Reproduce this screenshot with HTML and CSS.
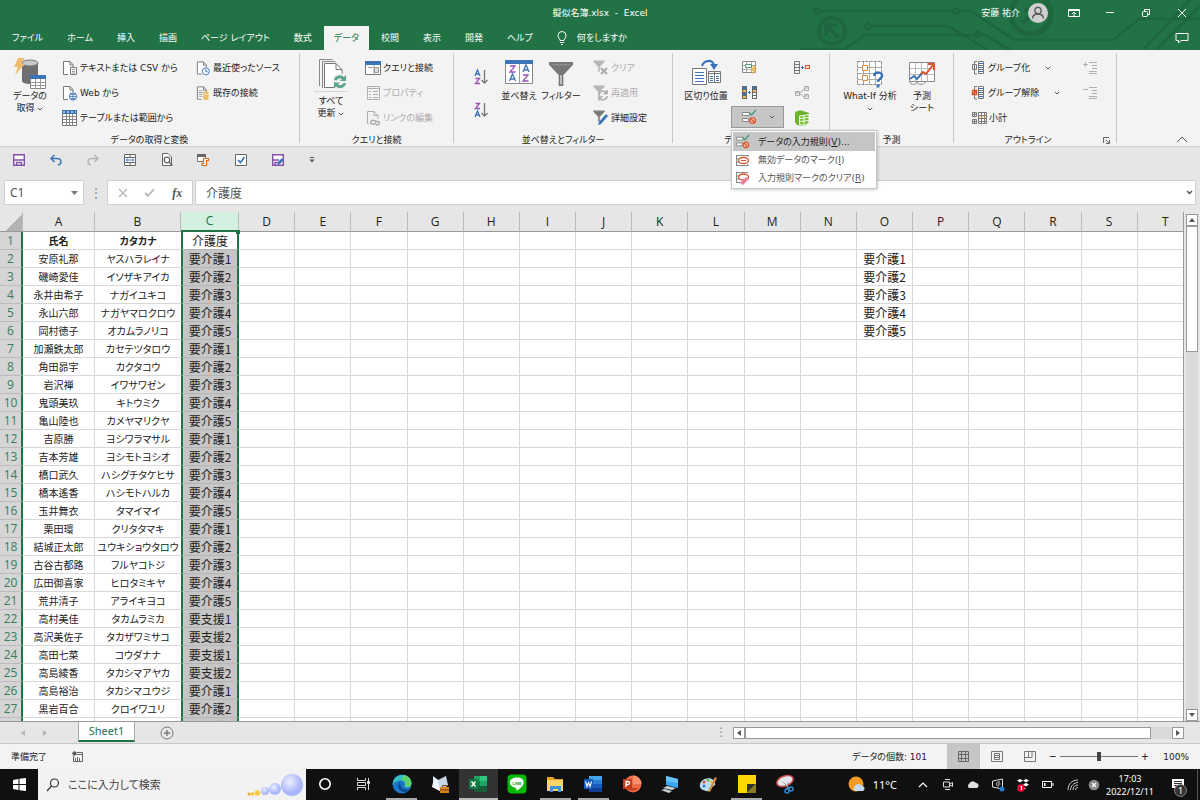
FILE: index.html
```html
<!DOCTYPE html>
<html lang="ja">
<head>
    <meta charset="UTF-8">
    <meta name="viewport" content="width=device-width, initial-scale=1.0">
    <title>擬似名簿.xlsx - Excel</title>
    <link rel="stylesheet" href="styles.css">
</head>
<body>
    <!-- Shared icons -->
    <svg class="sprite" aria-hidden="true">
        <symbol id="i-chevron" viewBox="0 0 6 4"><path d="M.8.8 3 3 5.2.8" fill="none" stroke="currentColor"/></symbol>
        <symbol id="i-doc" viewBox="0 0 16 16"><path d="M2.500 1.500h7l3.500 3.500v9.500H2.500z" fill="#fff"/><path d="M7 14.500H2.500v-13h6.500l3 3v3M9 1.500v3.500h3" fill="none" stroke="#777"/></symbol>
        <symbol id="i-rule" viewBox="0 0 16 16"><path d="M1.500 3.500h7v3h-7zM1.500 9.500h6v3h-6z" fill="#fff" stroke="#888"/><path d="M8 3.500l2.500 2.500 4.500-5" fill="none" stroke="#4a9a80" stroke-width="1.500"/><circle cx="11.500" cy="11.500" r="3" fill="#f4b9a8" stroke="#d9532c" stroke-width="1.200"/><path d="M9.500 9.500l4 4" stroke="#d9532c" stroke-width="1.200"/></symbol>
        <symbol id="i-funnel" viewBox="0 0 28 28"><path d="M1 1h26v3L16.500 15v12h-5V15L1 4z" fill="#777"/><path d="M4 4h20" stroke="#999"/><path d="M14 15v10" stroke="#ddd" stroke-width="1.500"/></symbol>
    </svg>

    <header class="title-area">
        <svg class="circuit" viewBox="0 0 400 50" fill="none" stroke="#1e6540" stroke-width="2.500">
            <circle cx="17" cy="11" r="2.500"/><path d="M20 11h133M159 11h12l44 29h98l26-21h61"/>
            <circle cx="32" cy="31" r="13" stroke-width="4"/><path d="M38 37 27 26m-1 10V25h11" stroke-width="4"/>
            <circle cx="68" cy="26" r="3"/><path d="M72 26h76l40 24M0 49h44l21-14h110m6 0h4l25 15"/>
            <circle cx="156" cy="11" r="2.500"/><circle cx="178" cy="34" r="2.500"/>
            <circle cx="231" cy="14" r="20" stroke-width="5"/><path d="m222 24 14-14m-12 0h12v12" stroke-width="4"/>
            <path d="M343 50 390 0M356 50 400 6"/>
        </svg>
        <div class="title-bar">
            <div class="doc-title">擬似名簿.xlsx &nbsp;-&nbsp; Excel</div>
            <div class="window-tools">
                <span class="user-name">安藤 祐介</span>
                <span class="avatar"><svg width="20" height="20" viewBox="0 0 20 20" fill="none" stroke="#555" stroke-width="1.300"><circle cx="10" cy="7.500" r="3.200"/><path d="M4.500 15.500c.5-6 10.500-6 11 0"/></svg></span>
                <button class="win-btn" aria-label="リボンの表示オプション"><svg width="12" height="10" viewBox="0 0 12 10" fill="none" stroke="#fff"><path d="M.5 1.500h11v7H.5zM.5 2.500h11M6 8V4M4 6l2-2 2 2"/></svg></button>
                <button class="win-btn" aria-label="最小化"><svg width="10" height="10" viewBox="0 0 10 10" stroke="#fff"><path d="M1 4.500h8"/></svg></button>
                <button class="win-btn" aria-label="元に戻す"><svg width="10" height="10" viewBox="0 0 10 10" fill="none" stroke="#fff"><rect x="1.500" y="3.500" width="5" height="5" rx="1"/><path d="M3.500 3V1.500h5v5H7"/></svg></button>
                <button class="win-btn" aria-label="閉じる"><svg width="10" height="10" viewBox="0 0 10 10" stroke="#fff"><path d="M1 1l8 8M9 1 1 9"/></svg></button>
            </div>
        </div>
        <nav class="tabs">
            <button class="tab">ファイル</button>
            <button class="tab">ホーム</button>
            <button class="tab">挿入</button>
            <button class="tab">描画</button>
            <button class="tab">ページ レイアウト</button>
            <button class="tab">数式</button>
            <button class="tab active">データ</button>
            <button class="tab">校閲</button>
            <button class="tab">表示</button>
            <button class="tab">開発</button>
            <button class="tab">ヘルプ</button>
            <button class="tab tell-me"><svg width="10" height="14" viewBox="0 0 10 14" fill="none" stroke="#fff"><path d="M3 9.500C3 7.500 1 7 1 4.500a4 4 0 0 1 8 0C9 7 7 7.500 7 9.500zM3 11.500h4M4 13.500h2"/></svg>何をしますか</button>
            <button class="comments" aria-label="コメント"><svg width="14" height="12" viewBox="0 0 14 12" fill="none" stroke="#fff"><path d="M1 1.500h12v7H6L3.500 11V8.500H1z"/></svg></button>
        </nav>
    </header>

    <section class="ribbon">
        <div class="group get-data">
            <div class="group-body">
                <button class="big">
                    <svg width="32" height="32" viewBox="0 0 32 32"><path d="M8 5v18c0 4 16 4 16 0V5z" fill="#6f6f6f"/><ellipse cx="16" cy="5" rx="8" ry="3" fill="#c8c8c8" stroke="#777"/><path d="M4 0h7L7 6h4L1 17l3-8H0z" fill="#eebc6c"/><path d="M16.500 17.500h15v13h-15z" fill="#fff" stroke="#888"/><path d="M16 17h16v4H16z" fill="#3c74b8"/><path d="M17 24.500h14M17 27.500h14M21.500 21v9M26.500 21v9" stroke="#999"/></svg>
                    <span>データの<br>取得 <svg class="chev"><use href="#i-chevron"/></svg></span>
                </button>
                <div class="cmd-col">
                    <button class="cmd"><svg width="17" height="16" viewBox="0 0 17 16"><use href="#i-doc" width="16" height="16"/><path d="M9.500 7.500h6v7h-6z" fill="#fff" stroke="#777"/><path d="M11 9.500h3M11 11.500h3M11 13h3" stroke="#999"/></svg>テキストまたは CSV から</button>
                    <button class="cmd"><svg width="17" height="16" viewBox="0 0 17 16"><use href="#i-doc" width="16" height="16"/><circle cx="12" cy="11.500" r="3.700" fill="#fff" stroke="#3c74b8"/><path d="M8.500 11.500h7M12 8v7M9.500 9.500h5M9.500 13.500h5" stroke="#3c74b8" stroke-width=".8"/></svg>Web から</button>
                    <button class="cmd"><svg width="17" height="16" viewBox="0 0 17 16"><path d="M1.500 2.500h14v13h-14z" fill="#fff" stroke="#777"/><path d="M1 0h15v4H1z" fill="#3c74b8"/><path d="M2 2h13" stroke="#fff" stroke-dasharray="2 2"/><path d="M2 6.500h13M2 9.500h13M2 12.500h13M5.500 4v11M8.500 4v11M11.500 4v11" stroke="#888"/></svg>テーブルまたは範囲から</button>
                </div>
                <div class="cmd-col">
                    <button class="cmd"><svg width="16" height="16" viewBox="0 0 17 16"><use href="#i-doc" width="16" height="16"/><circle cx="11.500" cy="11.500" r="3.700" fill="#fff" stroke="#3c74b8"/><path d="M11.500 9v3h2" fill="none" stroke="#3c74b8"/></svg>最近使ったソース</button>
                    <button class="cmd"><svg width="16" height="16" viewBox="0 0 17 16"><use href="#i-doc" width="16" height="16"/><path d="M4 5.500h4M4 7.500h5M4 9.500h4M4 11.500h4" stroke="#999"/><path d="M8.500 8v6c0 2 6 2 6 0V8c0-2-6-2-6 0z" fill="#efbd6b"/><path d="M8.500 8.500c0 1.500 6 1.500 6 0" fill="none" stroke="#fff" stroke-width=".7"/></svg>既存の接続</button>
                </div>
            </div>
            <div class="group-name">データの取得と変換</div>
        </div>

        <div class="group queries">
            <div class="group-body">
                <button class="big split">
                    <svg width="32" height="32" viewBox="0 0 32 32"><path d="M4.500 28V1.500h13M7.500 30V3.500h13" fill="none" stroke="#888"/><path d="M9.500 5.500H21l6 6v18H9.500z" fill="#fff" stroke="#777"/><path d="M21 5.500v6h6" fill="none" stroke="#777"/><circle cx="25" cy="23.500" r="8" fill="#f3f3f3"/><path d="M19 22a6 6 0 0 1 10-3l2-2v6h-6l2-2a4 4 0 0 0-5.500 1.500zM31 25a6 6 0 0 1-10 3.500l-2 2v-6h6l-2 2a4 4 0 0 0 5.500-1.500z" fill="#5fa58a"/></svg>
                    <span>すべて<br>更新 <svg class="chev"><use href="#i-chevron"/></svg></span>
                </button>
                <div class="cmd-col">
                    <button class="cmd"><svg width="16" height="16" viewBox="0 0 16 16"><path d="M.5 2.500h15v12H.5z" fill="#fff" stroke="#777"/><path d="M0 1h16v4H0z" fill="#3c74b8"/><path d="M9.500 7.500h4v5h-4zM3 7.500h5M9 5v9" fill="#ddd" stroke="#999"/></svg>クエリと接続</button>
                    <button class="cmd" disabled><svg width="16" height="16" viewBox="0 0 16 16" fill="none" stroke="#b5adb5"><path d="M2.500 1.500h12v13h-12zM2 3.500h12M4 6.500h2M4 9.500h2M4 12.500h2M8 6.500h5M8 9.500h5M8 12.500h5"/></svg>プロパティ</button>
                    <button class="cmd" disabled><svg width="16" height="16" viewBox="0 0 16 16" fill="none" stroke="#b0aab0"><path d="M4 13.500H2.500v-12H9l4 4V9M9 1.500v4h4"/><path d="M7 10.500h2.500a1.800 1.800 0 0 1 0 3.500H7a1.800 1.800 0 0 1 0-3.500zm4 1h2a1.800 1.800 0 0 1 0 3.500h-2" stroke-width="1.500"/></svg>リンクの編集</button>
                </div>
            </div>
            <div class="group-name">クエリと接続</div>
        </div>

        <div class="group sort">
            <div class="group-body">
                <div class="sort-col">
                    <button class="sort-btn" aria-label="昇順"><svg width="16" height="18" viewBox="0 0 16 18" fill="none" stroke-width="1.300"><path d="M2 8 4.500 2 7 8M3 6h3" stroke="#3c74b8"/><path d="M2.500 10.500h4l-4 5h4.500" stroke="#9a4fb5"/><path d="M11.500 2v13M8.500 12l3 3 3-3" stroke="#777"/></svg></button>
                    <button class="sort-btn" aria-label="降順"><svg width="16" height="18" viewBox="0 0 16 18" fill="none" stroke-width="1.300"><path d="M2.500 2.500h4l-4 5h4.500" stroke="#9a4fb5"/><path d="m2 16 2.500-6L7 16M3 14h3" stroke="#3c74b8"/><path d="M11.500 2v13M8.500 12l3 3 3-3" stroke="#777"/></svg></button>
                </div>
                <button class="big">
                    <svg width="28" height="32" viewBox="0 0 28 32"><path d="M.5 4.500h27v21H.5z" fill="#fff" stroke="#888"/><path d="M0 2h28v4H0z" fill="#3c74b8"/><path d="M14.500 6v20" stroke="#999"/><g fill="none" stroke-width="1.300"><path d="M5 8h5l-5 6h5.500M18 17h5l-5 6h5.500" stroke="#9a4fb5"/><path d="m4.500 23 3-7 3 7M5.500 21h4M18 14l3-7 3 7M19 12h4" stroke="#3c74b8"/></g></svg>
                    <span>並べ替え</span>
                </button>
                <button class="big">
                    <svg width="26" height="32" viewBox="0 0 28 32"><use href="#i-funnel" y="2" width="28" height="28"/></svg>
                    <span>フィルター</span>
                </button>
                <div class="cmd-col">
                    <button class="cmd" disabled><svg width="16" height="16" viewBox="0 0 16 16"><use href="#i-funnel" width="12" height="12" opacity=".5"/><path d="m8 8 6 6m0-6-6 6" stroke="#aaa" stroke-width="2"/></svg>クリア</button>
                    <button class="cmd" disabled><svg width="16" height="16" viewBox="0 0 16 16"><use href="#i-funnel" width="12" height="12" opacity=".5"/><path d="M6 10a4 4 0 0 1 7-2.500M14 5v3.500h-3.500M14 11a4 4 0 0 1-7 2.500M6 15.500V12h3.500" fill="none" stroke="#aaa" stroke-width="1.500"/></svg>再適用</button>
                    <button class="cmd"><svg width="16" height="16" viewBox="0 0 16 16"><use href="#i-funnel" width="12" height="12"/><path d="m5 15 1-3 7-8 2 2-7 8z" fill="#3c74b8"/></svg>詳細設定</button>
                </div>
            </div>
            <div class="group-name">並べ替えとフィルター</div>
        </div>

        <div class="group tools">
            <div class="group-body">
                <button class="big">
                    <svg width="30" height="32" viewBox="0 0 30 32"><path d="M11 8c2-6 10-7 12-1" fill="none" stroke="#3c74b8" stroke-width="2.200"/><path d="M19 6h8l-4 6z" fill="#3c74b8"/><path d="M1.500 10.500h14v16h-14z" fill="#fff" stroke="#777"/><path d="M4 14.500h9M4 17.500h9M4 20.500h9M4 23.500h9" stroke="#3c74b8"/><path d="M17.500 13.500h12v11h-12z" fill="#fff" stroke="#777"/><path d="M18 15.500h11M23.500 14v10" stroke="#777"/><path d="M19 18.500h3M19 20.500h3M19 22.500h3M25 18.500h3M25 20.500h3M25 22.500h3" stroke="#3c74b8"/></svg>
                    <span>区切り位置</span>
                </button>
                <div class="tool-col">
                    <button class="tool" aria-label="フラッシュ フィル"><svg width="16" height="16" viewBox="0 0 16 16"><path d="M1.500 1.500h13v11h-13z" fill="#fff" stroke="#888"/><path d="M2 5.500h12M2 9.500h12M5.500 2v10M10.500 2v10" stroke="#aaa"/><path d="M4.500 4.500h6v3h-6z" fill="#fff" stroke="#4a9a80"/><path d="M12 6h3l-1 3h2l-5 6 1-4h-2z" fill="#eebc5c"/></svg></button>
                    <button class="tool" aria-label="重複の削除"><svg width="16" height="16" viewBox="0 0 16 16"><path d="M1 1h5v13H1zM11 1h5v13h-5z" fill="#666"/><path d="M2 2h3v2H2zM2 8h3v2H2zM12 2h3v2h-3z" fill="#3c74b8"/><path d="M2 5h3v2H2zM2 11h3v2H2zM12 5h3v2h-3z" fill="#eebc6c"/><path d="M12 8h3v2h-3zM12 11h3v2h-3z" fill="#fff"/><path d="M7 7.500h3M8.500 6v3" stroke="#3c74b8"/></svg></button>
                    <div class="menu-anchor">
                        <button class="tool pressed" aria-label="データの入力規則"><svg width="16" height="16"><use href="#i-rule"/></svg><svg class="chev"><use href="#i-chevron"/></svg></button>
                        <div class="menu">
                            <button class="menu-item selected"><svg width="15" height="15"><use href="#i-rule"/></svg><span>データの入力規則(<u>V</u>)...</span></button>
                            <button class="menu-item"><svg width="15" height="15" viewBox="0 0 15 15" fill="none"><path d="M1 2.500h12M1 6h12M1 9h12M1 12.500h12M1.500 2v11M13 2v2M13 11v2" stroke="#888"/><ellipse cx="8.500" cy="7.500" rx="5" ry="3" fill="#fff" stroke="#d9532c" stroke-width="1.300"/><path d="M6 7.500h5" stroke="#d9532c"/></svg><span>無効データのマーク(<u>I</u>)</span></button>
                            <button class="menu-item"><svg width="15" height="15" viewBox="0 0 15 15" fill="none"><path d="M1 1.500h12M1 5h12M1 8h6M1 11.500h6M1.500 1v11" stroke="#888"/><ellipse cx="8.500" cy="6" rx="5" ry="3" fill="#fff" stroke="#d9532c" stroke-width="1.300"/><path d="m5 12 6-6 3 2-6 6z" fill="#e87f9c"/></svg><span>入力規則マークのクリア(<u>R</u>)</span></button>
                        </div>
                    </div>
                </div>
                <div class="tool-col narrow">
                    <button class="tool" aria-label="統合"><svg width="16" height="16" viewBox="0 0 16 16" fill="none"><path d="M.5 1.500h5v12h-5zM1 4.500h4M1 7.500h4M1 10.500h4" stroke="#777"/><path d="M7 7.500h3M8.500 6v3" stroke="#3c74b8"/><path d="M11.500 5.500h4v3h-4z" stroke="#d9532c" stroke-width="1.200"/></svg></button>
                    <button class="tool" aria-label="リレーションシップ"><svg width="16" height="16" viewBox="0 0 16 16" fill="none" stroke="#aaa"><path d="M1.500 6.500h4v4h-4zM10.500 1.500h4v4h-4zM10.500 9.500h4v4h-4zM6 8l4-4M6 9l4 3M10 3h5M10 11h5M1 8h5"/></svg></button>
                    <button class="tool" aria-label="データ モデルの管理"><svg width="16" height="16" viewBox="0 0 16 16"><path d="M1 3.500C1 1 6 0 9 1l6 2v10l-5 3-7-1-2-3z" fill="#6cb32c"/><path d="M5.500 6 15 4.500V13l-4 2.500-5.500-1zM5.500 8.500 15 7.500M5.500 11.500l9.500-1M10 5.500v9.500" fill="#7cc035" stroke="#fff" stroke-width=".9"/></svg></button>
                </div>
            </div>
            <div class="group-name">データ ツール</div>
        </div>

        <div class="group forecast">
            <div class="group-body">
                <button class="big what-if">
                    <svg width="28" height="32" viewBox="0 0 28 32"><path d="M1.500 3.500h24v23h-24z" fill="#fff" stroke="#888" stroke-dasharray="3 1"/><path d="M2 9.500h23M2 15.500h23M2 21.500h23M7.500 4v22M13.500 4v22M19.500 4v22" stroke="#aaa"/><path d="M6.500 7.500h5v5h-5zM6.500 17.500h5v5h-5z" fill="#fff" stroke="#ee8a35"/><path d="M18 18c1-5 9-4 8 0-.5 3-4 2.500-4 6" fill="none" stroke="#3c74b8" stroke-width="2.500"/><path d="M20.500 26.500h3v3h-3z" fill="#3c74b8"/></svg>
                    <span>What-If 分析<br><svg class="chev"><use href="#i-chevron"/></svg></span>
                </button>
                <button class="big">
                    <svg width="28" height="32" viewBox="0 0 28 32"><path d="M1.500 4.500h25v19h-25z" fill="#fff" stroke="#888"/><path d="M2 10.500h24M2 16.500h24M7.500 5v18M13.500 5v18M19.500 5v18" stroke="#bbb"/><path d="M2 24c0 3 7 3 7 0 0 3 8 3 8 0" fill="#fff" stroke="#888"/><path d="m2 21 4-3 3 3 5-6" fill="none" stroke="#3c74b8" stroke-width="2"/><path d="m13 16 2-2 3 2 7-9M20 6h6v6" fill="none" stroke="#d9532c" stroke-width="2"/></svg>
                    <span>予測<br>シート</span>
                </button>
            </div>
            <div class="group-name">予測</div>
        </div>

        <div class="group outline">
            <div class="group-body">
                <div class="cmd-col">
                    <button class="cmd far"><svg width="15" height="16" viewBox="0 0 15 16" fill="none" stroke="#777"><path d="M6 1.500H3.500V14H6M1.500 4.500h4v5h-4z"/><path d="M7.500 1.500h5v12h-5zM7 5.500h6M7 9.500h6" fill="#fff"/><path d="M8 3.500h4M8 7.500h4M8 11.500h4" stroke="#3c74b8"/></svg><span>グループ化</span><svg class="chev"><use href="#i-chevron"/></svg></button>
                    <button class="cmd far"><svg width="15" height="16" viewBox="0 0 15 16" fill="none" stroke="#777"><path d="M6 1.500H3.500V14H6"/><path d="M7.500 1.500h5v12h-5zM7 5.500h6M7 9.500h6" fill="#fff"/><path d="M8 3.500h4M8 7.500h4M8 11.500h4" stroke="#3c74b8"/><path d="M1.500 5.500h4v4h-4zM1 10l5-5" stroke="#d9532c" stroke-width="1.500"/></svg><span>グループ解除</span><svg class="chev"><use href="#i-chevron"/></svg></button>
                    <button class="cmd subtotal"><svg width="16" height="16" viewBox="0 0 16 16" fill="none" stroke="#777"><path d="M1.500 2.500h4v4h-4zM1.500 9.500h4v4h-4zM2 4.500h3M3.500 3v3M2 11.500h3M3.500 10v3"/><path d="M7.500 2.500h8v11h-8zM8 5.500h7M8 8.500h7M8 11.500h7M10.500 3v10M13.500 3v10" fill="#fff"/><path d="M8 7h7" stroke="#eebc6c"/></svg>小計</button>
                </div>
                <div class="cmd-col">
                    <button class="cmd" disabled aria-label="詳細データの表示"><svg width="15" height="16" viewBox="0 0 15 16" stroke="#b0b0b0"><path d="M0 4.500h5M2.500 2v5M6 2.500h8M9 5.500h5M9 8.500h5M6 11.500h8M6 13.500h8"/></svg></button>
                    <button class="cmd" disabled aria-label="詳細を表示しない"><svg width="15" height="16" viewBox="0 0 15 16" stroke="#b0b0b0"><path d="M0 4.500h5M6 2.500h8M9 5.500h5M9 8.500h5M6 11.500h8M6 13.500h8"/></svg></button>
                </div>
            </div>
            <div class="group-name">アウトライン<button class="launcher" aria-label="設定"><svg width="7" height="7" viewBox="0 0 7 7" fill="none" stroke="#666"><path d="M.5 6V.5H6M3 3l3 3M6.500 3v3.500H3"/></svg></button></div>
        </div>
        <button class="collapse" aria-label="リボンを折りたたむ"><svg width="12" height="7" viewBox="0 0 12 7" fill="none" stroke="#555"><path d="M1 6l5-5 5 5"/></svg></button>
    </section>

    <div class="quick-access">
        <button class="qa" aria-label="上書き保存"><svg width="12" height="12" viewBox="0 0 12 12"><path d="M.7.7h10.600v10.600H.7z" fill="#fff" stroke="#8350a5" stroke-width="1.400"/><path d="M1 6h10M3.500 11V8.500h5V11" fill="none" stroke="#8350a5" stroke-width="1.400"/></svg></button>
        <button class="qa" aria-label="元に戻す"><svg width="12" height="12" viewBox="0 0 12 12" fill="none" stroke="#3c74b8" stroke-width="1.500"><path d="M4.500 1 1 4.500 4.500 8M1 4.500h6c5 0 5 6 1 6.500"/></svg></button>
        <button class="qa" aria-label="やり直し"><svg width="12" height="12" viewBox="0 0 12 12" fill="none" stroke="#b5b5b5" stroke-width="1.500"><path d="M7.500 1 11 4.500 7.500 8M11 4.500H5c-5 0-5 6-1 6.500"/></svg></button>
        <button class="qa" aria-label="セルを結合"><svg width="12" height="12" viewBox="0 0 12 12" fill="none"><path d="M.5.500h11v11H.5z" fill="#fff" stroke="#666"/><path d="M1 3.500h10M1 8.500h10M6 1v2M6 9v2" stroke="#666"/><path d="M2 6h8M3.500 4.500 2 6l1.500 1.500M8.500 4.500 10 6 8.500 7.500" stroke="#3c74b8"/></svg></button>
        <button class="qa" aria-label="印刷プレビュー"><svg width="12" height="13" viewBox="0 0 12 13" fill="none" stroke="#666"><path d="M1.500.5H7l3.500 3.500v8.500h-9z" fill="#fff"/><circle cx="6" cy="7" r="2.800" stroke-width="1.300"/><path d="m8 9 3.500 3.500" stroke-width="1.500"/></svg></button>
        <button class="qa" aria-label="マクロ"><svg width="13" height="13" viewBox="0 0 13 13" fill="none"><path d="M.5 1.500h8v7h-8z" fill="#fff" stroke="#777"/><path d="M0 1h9v3H0z" fill="#666"/><path d="M6.500 5.500h5v2h-2v5H5v-2h1.500z" fill="#fff" stroke="#e07020" stroke-width="1.200"/></svg></button>
        <button class="qa" aria-label="チェック ボックス"><svg width="12" height="12" viewBox="0 0 12 12" fill="none"><path d="M.5.500h11v11H.5z" fill="#fff" stroke="#666"/><path d="m3 6 2.500 2.500L9.500 3" stroke="#2f6db5" stroke-width="1.600"/></svg></button>
        <button class="qa" aria-label="名前を付けて保存"><svg width="12" height="12" viewBox="0 0 12 12"><path d="M.7.7h10.600v10.600H.7z" fill="#fff" stroke="#8350a5" stroke-width="1.400"/><path d="M1 6h6M3 11V8.500h3" fill="none" stroke="#8350a5" stroke-width="1.400"/><path d="m5 11 1-3 4-4 2 2-4 4z" fill="#3c74b8"/></svg></button>
        <button class="qa" aria-label="ユーザー設定"><svg width="6" height="6" viewBox="0 0 6 6"><path d="M1 .5h4" stroke="#555"/><path d="M.5 2.500h5L3 5.500z" fill="#555"/></svg></button>
    </div>

    <div class="formula-bar">
        <div class="name-box">
            <input type="text" value="C1" aria-label="名前ボックス">
            <svg width="7" height="4" viewBox="0 0 7 4"><path d="M0 0h7L3.500 4z" fill="#777"/></svg>
        </div>
        <div class="grip">⋮</div>
        <div class="fx-box">
            <button aria-label="キャンセル"><svg width="10" height="10" viewBox="0 0 10 10" stroke="#b5b5b5" stroke-width="1.300"><path d="m1 1 8 8M9 1 1 9"/></svg></button>
            <button aria-label="入力"><svg width="11" height="10" viewBox="0 0 11 10" fill="none" stroke="#b5b5b5" stroke-width="1.800"><path d="m1 5 3 3 6-7"/></svg></button>
            <button class="fx" aria-label="関数の挿入">fx</button>
        </div>
        <div class="formula">
            <input type="text" value="介護度" aria-label="数式バー">
            <svg width="7" height="5" viewBox="0 0 7 5" fill="none" stroke="#555" stroke-width="1.500"><path d="m1 1 2.500 2.500L6 1"/></svg>
        </div>
    </div>

    <main class="workspace">
        <div class="sheet">
            <table class="grid" id="grid">
                <colgroup>
                    <col class="c-num"><col class="c-a"><col class="c-b"><col class="c-c">
                </colgroup>
                <thead><tr id="gridHead"></tr></thead>
                <tbody id="gridBody"></tbody>
            </table>
        </div>
        <div class="v-scroll">
            <button class="arrow" aria-label="上へ"><svg width="6" height="4" viewBox="0 0 6 4"><path d="M0 4h6L3 0z" fill="#555"/></svg></button>
            <div class="v-track"><div class="v-thumb"></div></div>
            <button class="arrow" aria-label="下へ"><svg width="6" height="4" viewBox="0 0 6 4"><path d="M0 0h6L3 4z" fill="#555"/></svg></button>
        </div>
    </main>

    <div class="sheet-bar">
        <button class="sheet-nav" aria-label="前のシート"><svg width="4" height="6" viewBox="0 0 4 6"><path d="M4 0v6L0 3z" fill="#b5b5b5"/></svg></button>
        <button class="sheet-nav" aria-label="次のシート"><svg width="4" height="6" viewBox="0 0 4 6"><path d="M0 0v6l4-3z" fill="#b5b5b5"/></svg></button>
        <button class="sheet-tab">Sheet1</button>
        <button class="add-sheet" aria-label="新しいシート"><svg width="14" height="14" viewBox="0 0 14 14" fill="none" stroke="#777"><circle cx="7" cy="7" r="6"/><path d="M4 7h6M7 4v6" stroke-width="1.400"/></svg></button>
        <div class="grip bar-grip">⋮</div>
        <div class="h-scroll">
            <button class="arrow" aria-label="左へ"><svg width="4" height="6" viewBox="0 0 4 6"><path d="M4 0v6L0 3z" fill="#555"/></svg></button>
            <div class="h-track"><div class="h-thumb"></div></div>
            <button class="arrow" aria-label="右へ"><svg width="4" height="6" viewBox="0 0 4 6"><path d="M0 0v6l4-3z" fill="#555"/></svg></button>
        </div>
    </div>

    <footer class="status-bar">
        <span>準備完了</span>
        <svg class="macro-icon" width="11" height="11" viewBox="0 0 11 11" fill="none" stroke="#666"><path d="M5 1.500h5.500v9H1.500V5M5 3.500h5M3.500 10V7M5.500 10V6M7.500 10V7" /><circle cx="2.500" cy="2.500" r="1.800" fill="#555"/></svg>
        <span class="count">データの個数: 101</span>
        <button class="view active" aria-label="標準"><svg width="11" height="11" viewBox="0 0 11 11" fill="none" stroke="#666"><path d="M.5.500h10v10H.5zM.5 3.500h10M.5 7.500h10M3.500 0v11M7.500 0v11"/></svg></button>
        <button class="view" aria-label="ページ レイアウト"><svg width="12" height="11" viewBox="0 0 12 11" fill="none" stroke="#777"><path d="M.5.500h11v10H.5zM3.500 2.500h5v6h-5zM4 4.500h4M4 6.500h4"/></svg></button>
        <button class="view" aria-label="改ページ プレビュー"><svg width="12" height="11" viewBox="0 0 12 11" fill="none" stroke="#777"><path d="M.5.500h11v10H.5zM1 6.500h7V1M4.500 1v5"/></svg></button>
        <button class="zoom-step" aria-label="縮小">−</button>
        <input class="zoom" type="range" min="10" max="190" value="100" aria-label="ズーム">
        <button class="zoom-step" aria-label="拡大">+</button>
        <span class="zoom-value">100%</span>
    </footer>

    <div class="taskbar">
        <button class="start" aria-label="スタート"><svg width="13" height="13" viewBox="0 0 13 13" fill="#fff"><path d="M0 2l5.500-1v5H0zM6.500.8 13 0v6H6.500zM0 7h5.500v5L0 11zM6.500 7H13v6l-6.500-.8z"/></svg></button>
        <label class="search">
            <svg width="14" height="14" viewBox="0 0 14 14" fill="none" stroke="#333" stroke-width="1.200"><circle cx="8.500" cy="5" r="4"/><path d="M5.500 8 1 13"/></svg>
            <input type="text" placeholder="ここに入力して検索">
            <svg width="58" height="26" viewBox="0 0 58 26">
                <defs><radialGradient id="ball" cx=".4" cy=".35"><stop offset="0" stop-color="#eef0ff"/><stop offset="1" stop-color="#a9b6fb"/></radialGradient></defs>
                <circle cx="4" cy="22" r="1.500" fill="#f5a623"/><circle cx="7.500" cy="22" r="1.800" fill="#f8c33c"/><circle cx="12.500" cy="21" r="2.800" fill="#fbcb45"/>
                <circle cx="20" cy="19" r="4" fill="url(#ball)"/><circle cx="30" cy="17" r="6" fill="url(#ball)"/><circle cx="47" cy="13" r="11" fill="url(#ball)"/>
            </svg>
        </label>
        <div class="apps">
            <button class="app" aria-label="Cortana"><svg width="14" height="14" viewBox="0 0 14 14" fill="none" stroke="#fff" stroke-width="1.600"><circle cx="7" cy="7" r="5.200"/></svg></button>
            <button class="app" aria-label="タスク ビュー"><svg width="14" height="14" viewBox="0 0 14 14" fill="none" stroke="#ddd"><path d="M1.500 1v2.500h8V1M1.500 13v-2.500h8V13M1.500 5.500h8v3h-8zM12.500 1v12"/><path d="M11.500 4.500h2v2h-2z" fill="#fff"/></svg></button>
            <button class="app open" aria-label="Edge"><svg width="20" height="20" viewBox="0 0 20 20"><circle cx="10" cy="10" r="9.500" fill="#1b78c8"/><path d="M1 8c2-9 17-10 18.500 1 0 5-6 5-7 3 2-3-1-6-5-5.500C4 7 2 9 .6 11z" fill="#35c0c0"/><path d="M12 1c5 1 8 5 7.500 9-1 4-6 4-7 2 2-3 0-6-3-6z" fill="#5fd36a"/><path d="M8 8c-4 4-1 9 4 10 3 0 5-1 6-3-4 2-10 0-10-7z" fill="#0c4a94"/></svg></button>
            <button class="app" aria-label="辞書"><svg width="20" height="20" viewBox="0 0 20 20"><path d="M3 2l5 4 8-4 2 9-8 6-7-4z" fill="#c6d7ea"/><path d="m8 6 2 11-8-4L4 3z" fill="#eef5fc"/><path d="M10 13h9v6h-9z" fill="#d98520"/><path d="M12.500 13v-1.500h4V13M10 16h9" fill="none" stroke="#774010"/></svg></button>
            <button class="app open current" aria-label="Excel"><svg width="20" height="20" viewBox="0 0 20 20"><path d="M6 2h7v16H6z" fill="#21a366"/><path d="M12 2h7v5h-7z" fill="#33c481"/><path d="M6 7h6v5H6z" fill="#107c41"/><path d="M12 7h7v5h-7z" fill="#21a366"/><path d="M6 12h13v6H6z" fill="#185c37"/><path d="M1 5h9v10H1z" fill="#107c41"/><path d="m3.500 7.500 4 5m0-5-4 5" stroke="#fff" stroke-width="1.400"/></svg></button>
            <button class="app" aria-label="LINE"><svg width="20" height="20" viewBox="0 0 20 20"><rect x=".5" y=".5" width="19" height="19" rx="4" fill="#06b906"/><path d="M10 3.500c-9 0-10 9-1 10.500l.5 2.500C19 12 19 3.500 10 3.500z" fill="#fff"/><text class="line-logo" x="10" y="11" text-anchor="middle">LINE</text></svg></button>
            <button class="app open" aria-label="エクスプローラー"><svg width="20" height="20" viewBox="0 0 20 20"><path d="M2 3h6l2 2h8v12H2z" fill="#e9a422"/><path d="M2 6h16v11H2z" fill="#fbd667"/><path d="M5 18v-6h11v6h-3v-3H8v3z" fill="#3f95dd"/></svg></button>
            <button class="app open" aria-label="Word"><svg width="20" height="20" viewBox="0 0 20 20"><path d="M6 2h13v4H6z" fill="#41a5ee"/><path d="M6 6h13v4H6z" fill="#2b7cd3"/><path d="M6 10h13v4H6z" fill="#185abd"/><path d="M6 14h13v4H6z" fill="#103f91"/><path d="M1 5h9v10H1z" fill="#185abd"/><path d="m2.500 7.500 1.500 5 1.500-4 1.500 4 1.500-5" fill="none" stroke="#fff" stroke-width="1.100"/></svg></button>
            <button class="app" aria-label="PowerPoint"><svg width="20" height="20" viewBox="0 0 20 20"><circle cx="11" cy="10" r="8.500" fill="#ed6c47"/><path d="M11 1.500a8.500 8.500 0 0 1 8.500 8.500H11z" fill="#ff8f6b"/><path d="M4 14h12a8 8 0 0 1-12 0z" fill="#c43e1c"/><path d="M1 5h9v10H1z" fill="#c43e1c"/><path d="M4 13V7.500h2a1.500 1.500 0 0 1 0 3H4" fill="none" stroke="#fff" stroke-width="1.300"/></svg></button>
            <button class="app" aria-label="リモート"><svg width="20" height="20" viewBox="0 0 20 20"><path d="m6 2 12 3v9L6 11z" fill="#37a8ee"/><path d="m6 2 12 3v4L6 7z" fill="#66c2f8"/><path d="m3 14 4-2 9 2-4 2zM1 16l4-1 7 2-3 2z" fill="#c8d0d5"/></svg></button>
            <button class="app" aria-label="ペイント"><svg width="20" height="20" viewBox="0 0 20 20"><path d="M2 10c2-7 14-8 15-1 1 4-4 3-4 5s-1 4-5 3-7-3-6-7z" fill="#b9dff2"/><circle cx="6" cy="8" r="1.500" fill="#e44b3a"/><circle cx="10" cy="6" r="1.500" fill="#6bb53c"/><circle cx="6" cy="12" r="1.500" fill="#3c78d8"/><circle cx="13" cy="8" r="1.300" fill="#f4b630"/><path d="m10 17 7-14 2 1-7 14z" fill="#d98a3c"/></svg></button>
            <button class="app open" aria-label="付箋"><svg width="20" height="20" viewBox="0 0 20 20"><path d="M1 1h18v18H1z" fill="#fdd608"/><path d="M10 19v-9h9z" fill="#333"/><path d="m10 19 9-9v9z" fill="#8a7a20"/></svg></button>
            <button class="app" aria-label="Snipping Tool"><svg width="20" height="20" viewBox="0 0 20 20"><ellipse cx="10" cy="7" rx="8.500" ry="5" transform="rotate(-20 10 7)" fill="#e5e5ea" stroke="#c34a50" stroke-width="1.500"/><path d="m8 8 7 7M13 8l-1 7" stroke="#999"/><circle cx="12" cy="17" r="2" fill="none" stroke="#2c8bd0" stroke-width="1.500"/><circle cx="16" cy="15" r="2" fill="none" stroke="#2c8bd0" stroke-width="1.500"/></svg></button>
        </div>
        <div class="tray">
            <span class="weather"><svg width="18" height="18" viewBox="0 0 18 18"><circle cx="8" cy="8" r="7.500" fill="#f59b22"/><path d="M7 15a3 3 0 0 1 0-5 4 4 0 0 1 7 0 2.500 2.500 0 0 1 0 5z" fill="#c5d9f9"/></svg>11°C</span>
            <button class="tray-btn" aria-label="隠れているアイコン"><svg width="10" height="6" viewBox="0 0 10 6" fill="none" stroke="#fff" stroke-width="1.200"><path d="m1 5 4-4 4 4"/></svg></button>
            <button class="tray-btn" aria-label="会議"><svg width="12" height="13" viewBox="0 0 12 13" fill="none" stroke="#ddd"><path d="M3 1.500h5M3 11.500h5M1.500 4v5h6V4zM8 6l2.500-1.500v4L8 7"/></svg></button>
            <button class="tray-btn" aria-label="OneDrive"><svg width="14" height="9" viewBox="0 0 14 9"><path d="M3 8a2.500 2.500 0 0 1 0-4 4 4 0 0 1 7-1 2.600 2.600 0 0 1 1 5z" fill="#e0e0e0"/></svg></button>
            <button class="tray-btn" aria-label="同期"><svg width="14" height="14" viewBox="0 0 14 14" fill="none" stroke="#ddd"><path d="m1.500 3 10-2v10l-10-2zM9 4c-4-1-5 4-1 4M7 6h2.500"/><circle cx="11" cy="11" r="2.500" fill="#2c7cd0" stroke="none"/></svg></button>
            <button class="tray-btn" aria-label="Dropbox"><svg width="14" height="14" viewBox="0 0 14 14"><path d="m4 1 3 1.500L4 4.500 1 2.500zM10 1l3 1.500-3 2-3-2zM10 5l3 1.500-3 2-3-2zM7 9l3 1.500L7 12z" fill="#fff"/><circle cx="5" cy="10" r="3.800" fill="#e01030"/><path d="M4.500 8.500 5.500 8v4" fill="none" stroke="#fff"/></svg></button>
            <button class="tray-btn" aria-label="バッテリー"><svg width="13" height="8" viewBox="0 0 13 8" fill="none" stroke="#fff"><path d="M1.500.5h9v6h-9zM12 2v3"/><path d="M3 2h1.500v3H3z" fill="#fff" stroke="none"/></svg></button>
            <button class="tray-btn" aria-label="ネットワーク"><svg width="12" height="12" viewBox="0 0 12 12" fill="none" stroke="#ccc"><path d="M1 11C1 5 5 1 11 1M3.500 11c0-4 3.500-7.500 7.500-7.500M6 11c0-3 2-5 5-5M8.500 11c0-1.500 1-2.500 2.500-2.500"/></svg></button>
            <button class="tray-btn last" aria-label="音量"><svg width="12" height="12" viewBox="0 0 12 12"><circle cx="6" cy="6" r="5.300" fill="#8a8a8a"/><path d="m4 4 4 4m0-4L4 8" stroke="#fff" stroke-width="1.200"/></svg></button>
            <div class="clock"><span>17:03</span><span>2022/12/11</span></div>
            <button class="notify" aria-label="通知"><svg width="14" height="14" viewBox="0 0 14 14"><path d="M1 1h12v9H7l-3 3v-3H1z" fill="#fff"/><path d="M3 3.500h8M3 5.500h8M3 7.500h5" stroke="#333"/></svg><span class="badge">1</span></button>
        </div>
    </div>

    <script src="app.js"></script>
</body>
</html>
```

FILE: styles.css
```css
* {
    margin: 0;
    padding: 0;
    box-sizing: border-box;
}

body {
    height: 100vh;
    display: flex;
    flex-direction: column;
    overflow: hidden;
    background: #e6e6e6;
    color: #222;
    font-family: "DejaVu Sans", "Noto Sans CJK JP", sans-serif;
    font-size: 9px;
    line-height: 12px;
    font-feature-settings: "palt";
}

button,
input {
    font: inherit;
    font-feature-settings: inherit;
    color: inherit;
    background: none;
    border: none;
    outline: none;
}

button {
    display: flex;
    align-items: center;
    justify-content: center;
    white-space: nowrap;
}

svg {
    flex: none;
}

.sprite {
    position: absolute;
    width: 0;
    height: 0;
}

.chev {
    width: 6px;
    height: 4px;
    vertical-align: middle;
    color: #555;
}

/* Title bar and tabs */
.title-area {
    position: relative;
    background: #217346;
    color: #fff;
}

.circuit {
    position: absolute;
    top: 0;
    right: 0;
    width: 400px;
    height: 50px;
}

.title-bar {
    position: relative;
    height: 26px;
    display: grid;
    grid-template-columns: 1fr auto 1fr;
    align-items: center;
}

.doc-title {
    grid-column: 2;
}

.window-tools {
    display: flex;
    align-items: center;
    justify-content: flex-end;
    height: 24px;
}

.avatar {
    width: 20px;
    height: 20px;
    margin: 0 8px;
    border-radius: 50%;
    background: #d0d0d0;
}

.win-btn {
    width: 36px;
    height: 24px;
}

.tabs {
    position: relative;
    display: flex;
    height: 24px;
}

.tab {
    padding: 0 12px;
}

.tab.active {
    padding: 0 10px;
    background: #f3f3f3;
    color: #217346;
}

.tell-me {
    gap: 10px;
}

.comments {
    margin-left: auto;
    width: 36px;
}

/* Ribbon */
.ribbon {
    display: flex;
    height: 97px;
    padding-top: 3px;
    background: #f3f3f3;
    border-bottom: 1px solid #cfcfcf;
}

.group {
    height: 90px;
    border-right: 1px solid #c8c8c8;
}

.get-data {
    width: 300px;
}

.get-data .group-body {
    padding-left: 4px;
}

.queries {
    width: 154px;
}

.queries .group-body {
    padding-left: 11px;
}

.sort {
    width: 219px;
}

.sort .group-body {
    padding-left: 19px;
}

.tools {
    width: 157px;
}

.tools .group-body {
    padding-left: 8px;
}

.forecast {
    width: 124px;
}

.forecast .group-body {
    padding-left: 10px;
}

.outline {
    width: 163px;
}

.outline .group-body {
    padding-left: 17px;
}

.group-body {
    display: flex;
    height: 79px;
    padding-top: 2px;
}

.group-body > * {
    flex: none;
}

.group-name {
    position: relative;
    padding-top: 1px;
    line-height: 15px;
    text-align: center;
}

.outline .group-name {
    padding-right: 14px;
}

.launcher {
    position: absolute;
    right: 6px;
    top: 5px;
}

.big {
    flex-direction: column;
    justify-content: flex-start;
    width: 42px;
    padding-top: 3px;
    line-height: 12px;
}

.get-data .big {
    width: 52px;
    margin-right: 5px;
}

.queries .big {
    width: 40px;
    margin-right: 14px;
}

.split span {
    margin-top: 1px;
    padding: 3px 4px 0;
    border-top: 1px solid #d5d5d5;
}

.tools .big {
    width: 50px;
}

.forecast .big {
    width: 36px;
}

.forecast .what-if {
    width: 60px;
    margin-right: 4px;
}

.get-data .cmd-col {
    width: 134px;
}

.get-data .cmd-col:last-child {
    width: auto;
}

.sort .cmd-col {
    margin-left: 11px;
}

.outline .cmd-col {
    width: 112px;
}

.outline .cmd-col:last-child {
    width: auto;
}

.cmd {
    height: 25px;
    gap: 2px;
}

.cmd:disabled {
    color: #b0aab0;
}

.far .chev {
    margin-left: 13px;
}

.sort-col {
    width: 16px;
    margin-right: 9px;
    padding-top: 5px;
}

.sort-btn {
    height: 33px;
}

.tool-col {
    width: 53px;
}

.tool-col.narrow {
    width: 16px;
    margin-left: 10px;
}

.tool {
    height: 25px;
    padding-left: 10px;
}

.narrow .tool {
    padding-left: 0;
}

.tool.pressed {
    width: 53px;
    height: 22px;
    padding: 0;
    gap: 12px;
    background: #c6c6c6;
    border: 1px solid #999;
}

.menu-anchor {
    position: relative;
    padding-top: 1px;
}

.menu {
    position: absolute;
    z-index: 2;
    top: 25px;
    left: 0;
    width: 146px;
    padding: 1px;
    background: #fff;
    border: 1px solid #c6c6c6;
    box-shadow: 1px 1px 3px rgba(0, 0, 0, 0.2);
}

.menu-item {
    width: 100%;
    height: 18px;
    padding-left: 2px;
    justify-content: flex-start;
    gap: 8px;
    color: #555;
}

.menu-item.selected {
    height: 19px;
    background: #c5c5c5;
    color: #222;
}

.collapse {
    margin-left: auto;
    width: 36px;
    height: 14px;
    align-self: flex-end;
}

/* Quick access toolbar */
.quick-access {
    display: flex;
    height: 33px;
    padding: 0 0 8px;
}

.qa {
    width: 37px;
}

.qa:last-child {
    width: 32px;
}

/* Formula bar */
.formula-bar {
    display: flex;
    height: 25px;
    padding: 0 4px;
    font-family: "Noto Sans", "Noto Sans CJK JP", sans-serif;
    font-size: 12px;
    font-feature-settings: normal;
    color: #555;
}

.name-box,
.fx-box,
.formula {
    display: flex;
    align-items: center;
    background: #fff;
    border: 1px solid #cfcfcf;
}

.name-box {
    width: 80px;
    padding: 0 5px;
}

.name-box input {
    width: 100%;
}

.grip {
    width: 23px;
    text-align: center;
    font-size: 12px;
    line-height: 25px;
    color: #888;
}

.fx-box {
    width: 86px;
    padding: 0 1px;
}

.fx-box button {
    width: 28px;
}

.fx-box .fx {
    font-family: "Liberation Serif", serif;
    font-style: italic;
    font-weight: bold;
}

.formula {
    flex: 1;
    margin-left: 2px;
    padding: 0 2px 0 10px;
}

.formula input {
    flex: 1;
}

/* Sheet */
.workspace {
    flex: 1;
    min-height: 0;
    display: flex;
    padding: 7px 2px 0 0;
}

.sheet {
    flex: 1;
    overflow: hidden;
    border-right: 1px solid #999;
}

.grid {
    /* the last column runs past the right edge */
    width: calc(100% + 11px);
    table-layout: fixed;
    border-collapse: separate;
    border-spacing: 0;
    font-family: "Noto Sans CJK JP", sans-serif;
    font-size: 10px;
    text-align: center;
}

.c-num {
    width: 23px;
}

.c-a {
    width: 72px;
}

.c-b {
    width: 86px;
}

.c-c {
    width: 58px;
}

.grid th {
    font-family: "Open Sans", "Liberation Sans", sans-serif;
    font-weight: normal;
    font-size: 12px;
}

.grid thead th {
    height: 20px;
    line-height: 18px;
    border-right: 1px solid #bbb;
    border-bottom: 1px solid #999;
    background: #e6e6e6;
}

.grid .corner {
    background: linear-gradient(135deg, #e6e6e6 60%, #b2b2b2 60%);
}

.grid thead .picked {
    background: #d3f0e0;
    color: #217346;
    border-bottom: 2px solid #217346;
}

.grid tbody th {
    height: 18px;
    line-height: 17px;
    background: #d5d5d5;
    color: #3b7c5a;
    border-right: 2px solid #217346;
    border-bottom: 1px solid #bbb;
}

.grid td {
    height: 18px;
    line-height: 17px;
    background: #fff;
    border-right: 1px solid #d8d8d8;
    border-bottom: 1px solid #d8d8d8;
    white-space: nowrap;
}

.grid .title {
    font-weight: bold;
}

.grid .kana {
    border-right: none;
}

.grid .care,
.grid .list {
    font-size: 12px;
}

.grid .care {
    background: #c6c6c6;
    border-left: 2px solid #217346;
    border-right: 2px solid #217346;
    border-bottom-color: #b5b5b5;
}

.grid .first {
    position: relative;
    background: #fff;
}

/* corner mark of the selection */
.grid .first::after {
    content: "";
    position: absolute;
    top: -2px;
    right: -3px;
    width: 4px;
    height: 4px;
    background: #217346;
}

.arrow {
    width: 12px;
    height: 12px;
    background: #fff;
    border: 1px solid #999;
}

.v-scroll {
    display: flex;
    flex-direction: column;
    width: 12px;
    margin-left: 2px;
    padding-top: 2px;
}

.v-track {
    flex: 1;
    background: #dadada;
}

.v-thumb {
    height: 26%;
    background: #fff;
    border: 1px solid #999;
}

/* Sheet tabs */
.sheet-bar {
    display: flex;
    align-items: center;
    height: 23px;
    padding: 0 16px 0 12px;
    border-top: 1px solid #999;
    border-bottom: 1px solid #c8c8c8;
}

.sheet-nav {
    width: 22px;
}

.sheet-tab {
    width: 57px;
    height: 20px;
    margin: 0 25px 2px 22px;
    background: #fff;
    border-right: 1px solid #aaa;
    border-left: 1px solid #aaa;
    border-bottom: 2px solid #217346;
    color: #217346;
    font-family: "Noto Sans", sans-serif;
    font-size: 11px;
}

.bar-grip {
    margin-left: auto;
}

.h-scroll {
    display: flex;
    width: calc(38% + 6px);
}

.h-track {
    flex: 1;
    background: #dadada;
}

.h-thumb {
    width: 95%;
    height: 12px;
    background: #fff;
    border: 1px solid #999;
}

/* Status bar */
.status-bar {
    display: flex;
    align-items: center;
    height: 25px;
    padding: 0 11px;
    background: #f3f3f3;
}

.macro-icon {
    margin-left: 25px;
}

.count {
    margin-left: auto;
    margin-right: 20px;
}

.view {
    width: 33px;
    height: 25px;
}

.view.active {
    background: #c6c6c6;
}

.zoom-step {
    width: 14px;
    font-family: "Noto Sans", sans-serif;
    font-size: 12px;
}

.zoom {
    appearance: none;
    width: 78px;
    height: 12px;
    background: linear-gradient(#777, #777) center / 100% 1px no-repeat;
}

.zoom::-webkit-slider-thumb {
    appearance: none;
    width: 4px;
    height: 9px;
    background: #444;
}

.zoom-value {
    width: 37px;
    text-align: right;
}

/* Taskbar */
.taskbar {
    display: flex;
    height: 31px;
    background: #101010;
    color: #fff;
    font-family: "Noto Sans", "Noto Sans CJK JP", sans-serif;
}

.start {
    width: 38px;
}

.search {
    display: flex;
    align-items: center;
    width: 268px;
    padding: 0 3px 0 8px;
    gap: 8px;
    background: #f2f2f2;
    color: #333;
}

.search input {
    flex: 1;
    min-width: 0;
    font-size: 11px;
}

.search input::placeholder {
    color: #444;
}

.apps {
    display: flex;
    width: 498px;
}

.app {
    flex: 1;
    border-bottom: 2px solid transparent;
}

.app.open {
    /* short running bar below the icon */
    background: linear-gradient(#aaa, #aaa) center bottom / 31px 2px no-repeat border-box;
}

.app.current {
    background: #333;
    border-bottom-color: #bbb;
}

.line-logo {
    font: bold 4px "Liberation Sans", sans-serif;
    fill: #06a006;
}

.tray {
    display: flex;
    align-items: center;
    margin-left: auto;
    padding-right: 2px;
}

.weather {
    display: flex;
    align-items: center;
    gap: 7px;
    margin-right: 13px;
    font-size: 11px;
}

.tray-btn {
    width: 25px;
}

.tray-btn.last {
    width: 17px;
}

.clock {
    display: flex;
    flex-direction: column;
    align-items: center;
    width: 56px;
    line-height: 13px;
}

.notify {
    position: relative;
    width: 40px;
    height: 31px;
    border-right: 1px solid #555;
}

.badge {
    position: absolute;
    right: 10px;
    bottom: 3px;
    width: 13px;
    height: 13px;
    border: 1px solid #888;
    border-radius: 50%;
    background: #333;
    line-height: 11px;
    text-align: center;
}
```

FILE: app.js
```js
const columns = 'ABCDEFGHIJKLMNOPQRST'.split('');

const people = [
    ['氏名', 'カタカナ', '介護度'],
    ['安原礼那', 'ヤスハラレイナ', '要介護1'],
    ['磯崎愛佳', 'イソザキアイカ', '要介護2'],
    ['永井由希子', 'ナガイユキコ', '要介護3'],
    ['永山六郎', 'ナガヤマロクロウ', '要介護4'],
    ['岡村徳子', 'オカムラノリコ', '要介護5'],
    ['加瀬鉄太郎', 'カセテツタロウ', '要介護1'],
    ['角田昴宇', 'カクタコウ', '要介護2'],
    ['岩沢禅', 'イワサワゼン', '要介護3'],
    ['鬼頭美玖', 'キトウミク', '要介護4'],
    ['亀山陸也', 'カメヤマリクヤ', '要介護5'],
    ['吉原勝', 'ヨシワラマサル', '要介護1'],
    ['吉本芳雄', 'ヨシモトヨシオ', '要介護2'],
    ['橋口武久', 'ハシグチタケヒサ', '要介護3'],
    ['橋本遙香', 'ハシモトハルカ', '要介護4'],
    ['玉井舞衣', 'タマイマイ', '要介護5'],
    ['栗田環', 'クリタタマキ', '要介護1'],
    ['結城正太郎', 'ユウキショウタロウ', '要介護2'],
    ['古谷古都路', 'フルヤコトジ', '要介護3'],
    ['広田御喜家', 'ヒロタミキヤ', '要介護4'],
    ['荒井清子', 'アライキヨコ', '要介護5'],
    ['高村美佳', 'タカムラミカ', '要支援1'],
    ['高沢美佐子', 'タカザワミサコ', '要支援2'],
    ['高田七菜', 'コウダナナ', '要支援1'],
    ['高島綾香', 'タカシマアヤカ', '要支援2'],
    ['高島裕治', 'タカシマユウジ', '要介護1'],
    ['黒岩百合', 'クロイワユリ', '要介護2'],
    ['', '', '要介護3']
];

// Source list for the validation rule, O2:O6
const careLevels = ['要介護1', '要介護2', '要介護3', '要介護4', '要介護5'];

function addCell(row, tag, text, className) {
    const cell = document.createElement(tag);
    cell.textContent = text;
    if (className) cell.className = className;
    row.appendChild(cell);
}

const head = document.getElementById('gridHead');
addCell(head, 'th', '', 'corner');
columns.forEach(name => addCell(head, 'th', name, name === 'C' ? 'picked' : ''));

const body = document.getElementById('gridBody');
people.forEach((person, index) => {
    const row = document.createElement('tr');
    const top = index === 0;
    addCell(row, 'th', index + 1);
    addCell(row, 'td', person[0], top ? 'title' : '');
    addCell(row, 'td', person[1], top ? 'kana title' : 'kana');
    addCell(row, 'td', person[2], top ? 'care first' : 'care');
    columns.slice(3).forEach(name => {
        const inList = name === 'O' && index >= 1 && index <= careLevels.length;
        addCell(row, 'td', inList ? careLevels[index - 1] : '', inList ? 'list' : '');
    });
    body.appendChild(row);
});
```
